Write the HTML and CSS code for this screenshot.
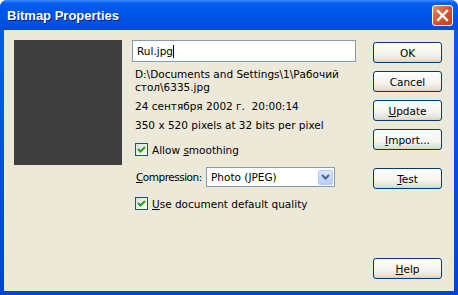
FILE: index.html
```html
<!DOCTYPE html>
<html>
<head>
    <title>Bitmap Properties</title>
    <link rel="stylesheet" href="styles.css">
</head>
<body>
    <div class="window">
        <div class="titlebar">
            <span class="title">Bitmap Properties</span>
            <div class="close">
                <svg width="13" height="13" viewBox="0 0 13 13"><path d="M2 2 L11 11 M11 2 L2 11" stroke="#fff" stroke-width="2.4" stroke-linecap="square"/></svg>
            </div>
        </div>
        <div class="client">
            <div class="preview"></div>

            <div class="details">
                <div class="field">Rul.jpg<span class="caret"></span></div>
                <div class="info">
                    <p>D:\Documents and Settings\1\Рабочий<br>стол\6335.jpg</p>
                    <p>24 сентября 2002 г.&nbsp; 20:00:14</p>
                    <p>350 x 520 pixels at 32 bits per pixel</p>
                </div>
                <label class="check first">
                    <span class="box"><svg width="9" height="9" viewBox="0 0 9 9"><path d="M1 4 L3.5 6.5 L8 2" fill="none" stroke="#21a121" stroke-width="2"/></svg></span>
                    <span>Allow <u>s</u>moothing</span>
                </label>
                <div class="row">
                    <span class="lbl"><u>C</u>ompression:</span>
                    <div class="select">
                        <span>Photo (JPEG)</span>
                        <span class="drop"><svg width="9" height="6" viewBox="0 0 9 6"><path d="M1 1 L4.5 4.5 L8 1" fill="none" stroke="#4d6185" stroke-width="2"/></svg></span>
                    </div>
                </div>
                <label class="check">
                    <span class="box"><svg width="9" height="9" viewBox="0 0 9 9"><path d="M1 4 L3.5 6.5 L8 2" fill="none" stroke="#21a121" stroke-width="2"/></svg></span>
                    <span><u>U</u>se document default quality</span>
                </label>
            </div>

            <div class="buttons">
                <button>OK</button>
                <button>Cancel</button>
                <button><u>U</u>pdate</button>
                <button><u>I</u>mport...</button>
                <button class="spaced"><u>T</u>est</button>
                <button class="bottom"><u>H</u>elp</button>
            </div>
        </div>
    </div>
</body>
</html>
```

FILE: styles.css
```css
body { margin: 0; font-family: Tahoma, "DejaVu Sans", sans-serif; font-size: 10.5px; color: #000; background: #fff; }
p { margin: 0; }
u { text-decoration: underline; text-underline-offset: 1px; }

.window { width: 458px; height: 295px; display: flex; flex-direction: column; border-radius: 7px 7px 0 0; background: linear-gradient(#0a5de8, #0054e3 40%, #0046d4); overflow: hidden; }
.titlebar { height: 30px; flex: none; display: flex; align-items: center; justify-content: space-between; padding: 0 5px 0 7px; background: linear-gradient(#3c8ffb 0, #0a5ff0 3px, #0058ee 8px, #0054e3 18px, #0050dc 26px, #0848d0 30px); }
.title { font-family: "Liberation Sans", Arial, sans-serif; font-weight: bold; font-size: 13px; color: #fff; text-shadow: 1px 1px 0 #0a1e78; }
.close { width: 19px; height: 19px; border: 1px solid #fff; border-radius: 3px; background: linear-gradient(135deg, #e8906e, #d5532f 50%, #c4401b); display: flex; align-items: center; justify-content: center; margin-top: 1px; }

.client { flex: 1; margin: 0 4px 4px 4px; background: #ece9d8; display: flex; padding: 10px 12px 12px 10px; }
.preview { width: 108px; height: 125px; background: #3f3f3f; flex: none; }

.details { width: 224px; margin-left: 10px; display: flex; flex-direction: column; }
.field { height: 20px; border: 1px solid #7f9db9; background: #fff; padding: 0 4px; line-height: 20px; display: flex; align-items: center; }
.caret { width: 1px; height: 13px; background: #000; }
.info { padding-left: 3px; margin-top: 6px; line-height: 13px; }
.info p + p { margin-top: 6px; }

.check { display: flex; align-items: center; gap: 4px; padding-left: 3px; height: 13px; margin-top: 10px; }
.check.first { margin-top: 11px; }
.box { width: 11px; height: 11px; border: 1px solid #1c5180; background: linear-gradient(135deg, #dcdcd7, #fff); display: flex; align-items: center; justify-content: center; }

.row { display: flex; align-items: center; margin-top: 11px; padding-left: 4px; }
.lbl { width: 70px; flex: none; letter-spacing: -0.5px; }
.select { width: 123px; height: 18px; border: 1px solid #7f9db9; background: #fff; display: flex; align-items: center; justify-content: space-between; padding-left: 4px; }
.drop { width: 15px; height: 15px; margin-right: 1px; border-radius: 2px; background: linear-gradient(#dbe7fd, #b9cdf9); border: 1px solid #b7caf5; box-sizing: border-box; display: flex; align-items: center; justify-content: center; }

.buttons { margin-left: auto; margin-top: 2px; display: flex; flex-direction: column; gap: 8px; width: 69px; }
button { height: 21px; width: 69px; padding: 0; font-family: inherit; font-size: 10.5px; color: #000; border: 1px solid #003c74; border-radius: 3px; background: linear-gradient(#ffffff, #f4f3ee 60%, #e3e0d5 90%, #d6d0c5); }
.spaced { margin-top: 10px; }
.bottom { margin-top: auto; }
```
